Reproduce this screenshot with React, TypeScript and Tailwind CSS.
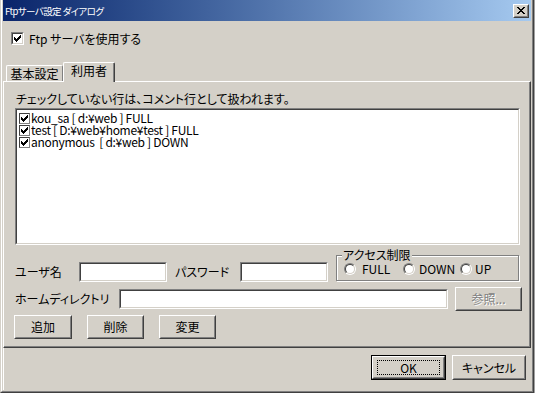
import type { ReactNode } from 'react';

const font = "font-['Noto_Sans_CJK_JP','Noto_Sans',sans-serif] [font-feature-settings:'palt']";

const Sunken = ({ className = '', children }: { className?: string; children?: ReactNode }) => (
  <div className={`border border-t-[#808080] border-l-[#808080] border-r-white border-b-white ${className}`}>
    <div className="h-full w-full border border-t-[#404040] border-l-[#404040] border-r-[#d4d0c8] border-b-[#d4d0c8] bg-white">
      {children}
    </div>
  </div>
);

const Raised = ({ className = '', children }: { className?: string; children?: ReactNode }) => (
  <div className={`border border-t-white border-l-white border-r-[#404040] border-b-[#404040] ${className}`}>
    <div className="flex h-full w-full items-center justify-center border border-t-[#d4d0c8] border-l-[#d4d0c8] border-r-[#808080] border-b-[#808080]">
      {children}
    </div>
  </div>
);

// classic 7x7 pixel tick
const tick = [2, 3, 4, 3, 2, 1, 0];

const Checkbox = () => (
  <Sunken className="h-[13px] w-[13px] shrink-0">
    <svg width="9" height="9" viewBox="0 0 9 9" shapeRendering="crispEdges" className="block">
      {tick.map((y, i) => (
        <rect key={i} x={1 + i} y={1 + y} width="1" height="3" fill="#000" />
      ))}
    </svg>
  </Sunken>
);

const SmallCheckbox = () => (
  <div className="h-[11px] w-[11px] shrink-0 border border-t-[#404040] border-l-[#404040] border-r-[#808080] border-b-[#808080] bg-white">
    <svg width="9" height="9" viewBox="0 0 9 9" shapeRendering="crispEdges" className="block">
      {tick.map((y, i) => (
        <rect key={i} x={1 + i} y={1 + y} width="1" height="3" fill="#000" />
      ))}
    </svg>
  </div>
);

const Radio = () => (
  <div className="h-[12px] w-[12px] shrink-0 rounded-full border border-t-[#808080] border-l-[#808080] border-r-white border-b-white">
    <div className="h-full w-full rounded-full border border-t-[#404040] border-l-[#404040] border-r-[#d4d0c8] border-b-[#d4d0c8] bg-white" />
  </div>
);

const Button = ({ className = '', children, disabled = false }: { className?: string; children: ReactNode; disabled?: boolean }) => (
  <Raised className={className}>
    <span className={disabled ? 'text-[#808080] [text-shadow:1px_1px_0_#fff]' : 'text-black'}>{children}</span>
  </Raised>
);

const users = ['kou_sa [ d:¥web ] FULL', 'test [ D:¥web¥home¥test ] FULL', 'anonymous  [ d:¥web ] DOWN'];

export default function App() {
  return (
    <div className={`flex h-[393px] w-[535px] bg-[#a0a0a0] text-[12px] leading-[12px] text-black ${font}`}>
      <div className="flex h-[393px] w-[534px] flex-col border-r border-b border-l border-r-[#404040] border-b-[#404040] border-l-[#d4d0c8] bg-[#d4d0c8]">
        <div className="flex flex-1 flex-col border-r border-b border-l border-r-[#808080] border-b-[#808080] border-l-white px-px pb-px">
          {/* title bar */}
          <div className="flex h-[21px] shrink-0 items-center bg-linear-to-r from-[#0a246a] to-[#a6caf0] pr-[2px] pl-[2px]">
            <span className="text-[9.5px] tracking-[-0.6px] text-white">Ftpサーバ設定 ダイアログ</span>
            <Raised className="ml-auto h-[14px] w-[16px] bg-[#d4d0c8]">
              <svg width="8" height="7" viewBox="0 0 8 7" shapeRendering="crispEdges" className="block">
                <path d="M0 0h2v1h-2zM6 0h2v1h-2zM1 1h2v1h-2zM5 1h2v1h-2zM2 2h4v1h-4zM3 3h2v1h-2zM2 4h4v1h-4zM1 5h2v1h-2zM5 5h2v1h-2zM0 6h2v1h-2zM6 6h2v1h-2z" fill="#000" />
              </svg>
            </Raised>
          </div>

          {/* use server */}
          <div className="mt-[11px] ml-[8px] flex h-[13px] items-center gap-[5px]">
            <Checkbox />
            <span>Ftp サーバを使用する</span>
          </div>

          {/* tabs */}
          <div className="mt-[17px] flex h-[19px] items-end pl-[3px]">
            <div className="flex h-[16px] w-[57px] items-center justify-center rounded-t-[2px] border-t border-l border-r border-t-white border-l-white border-r-[#808080] pt-px">
              基本設定
            </div>
            <div className="relative z-10 -mb-px flex h-[20px] w-[52px] items-start justify-center rounded-t-[2px] border-t border-l border-r border-t-white border-l-white border-r-[#404040] bg-[#d4d0c8] pt-[2px]">
              <div className="absolute top-0 right-0 bottom-0 w-px bg-[#808080]" />
              利用者
            </div>
          </div>

          {/* tab panel */}
          <div className="border-t border-r border-b border-l border-t-white border-r-[#404040] border-b-[#404040] border-l-white">
            <div className="flex flex-col border-r border-b border-r-[#808080] border-b-[#808080] pt-[11px] pb-[7px] pl-[11px]">
              <div className="ml-px h-[12px]">チェックしていない行は、コメント行として扱われます。</div>

              <Sunken className="mt-[3px] h-[137px] w-[505px]">
                <div className="flex flex-col pt-[2px] pl-[2px]">
                  {users.map((u) => (
                    <div key={u} className="flex h-[12px] items-center gap-[1px]">
                      <SmallCheckbox />
                      <span className="whitespace-pre tracking-[-0.3px]">{u}</span>
                    </div>
                  ))}
                </div>
              </Sunken>

              {/* user / password / access */}
              <div className="flex h-[37px] items-end">
                <div className="flex h-[20px] w-[64px] items-center">ユーザ名</div>
                <Sunken className="h-[20px] w-[88px]" />
                <div className="ml-[8px] flex h-[20px] w-[65px] items-center">パスワード</div>
                <Sunken className="h-[20px] w-[88px]" />
                <div className="relative mb-px ml-[8px] flex h-[26px] w-[183px] items-center border border-[#808080] pt-[2px] pl-[7px] shadow-[1px_1px_0_#fff,inset_1px_1px_0_#fff]">
                  <span className="absolute top-[-8px] left-[5px] bg-[#d4d0c8] px-px leading-[13px]">アクセス制限</span>
                  <div className="flex w-[59px] items-center gap-[6px]">
                    <Radio />
                    <span>FULL</span>
                  </div>
                  <div className="flex w-[57px] items-center gap-[4px]">
                    <Radio />
                    <span>DOWN</span>
                  </div>
                  <div className="flex items-center gap-[3px]">
                    <Radio />
                    <span>UP</span>
                  </div>
                </div>
              </div>

              {/* home dir */}
              <div className="mt-[5px] flex h-[24px] items-center">
                <div className="w-[104px]">ホームディレクトリ</div>
                <Sunken className="h-[20px] w-[329px]" />
                <Button className="ml-[7px] h-[24px] w-[67px]" disabled>
                  参照...
                </Button>
              </div>

              {/* actions */}
              <div className="mt-[4px] -ml-px flex gap-[15px]">
                <Button className="h-[24px] w-[58px]">追加</Button>
                <Button className="h-[24px] w-[57px]">削除</Button>
                <Button className="h-[24px] w-[57px]">変更</Button>
              </div>
            </div>
          </div>

          {/* ok / cancel */}
          <div className="flex flex-1 items-start justify-end gap-[6px] border-l border-l-white pt-[7px] pr-[5px]">
            <div className="h-[25px] w-[75px] border border-black">
              <Raised className="h-full w-full">
                <div className="flex h-[15px] w-[63px] items-center justify-center border border-dotted border-black">OK</div>
              </Raised>
            </div>
            <Button className="h-[25px] w-[74px]">キャンセル</Button>
          </div>
        </div>
      </div>
    </div>
  );
}
